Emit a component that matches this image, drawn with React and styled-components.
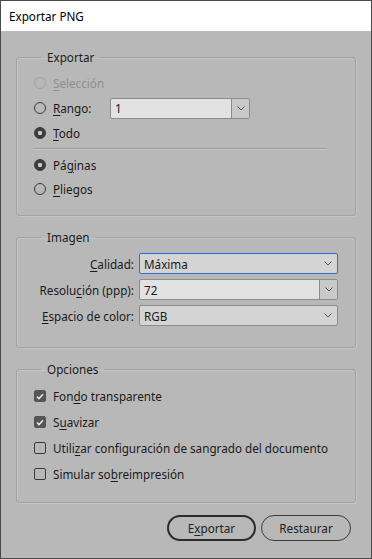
import React from "react";
import styled, { createGlobalStyle } from "styled-components";

const GlobalStyle = createGlobalStyle`
  html, body {
    margin: 0;
    padding: 0;
    background: #b8b8b8;
  }
  * {
    box-sizing: border-box;
  }
`;

const Window = styled.div`
  width: 372px;
  height: 559px;
  display: flex;
  flex-direction: column;
  border: 1px solid #4a4a4a;
  font-family: "Noto Sans", "Open Sans", sans-serif;
  font-size: 11.7px;
  color: #1b1b1b;
`;

const TitleBar = styled.div`
  height: 30px;
  background: #ffffff;
  display: flex;
  align-items: center;
  padding-left: 8px;
  color: #000;
`;

const Body = styled.div`
  flex: 1;
  background: #b8b8b8;
  display: flex;
  flex-direction: column;
  gap: 13px;
  padding: 18px 15px 0 15px;
`;

const Group = styled.fieldset`
  margin: 0;
  padding: ${({ $pad }) => $pad};
  border: 1px solid #a2a2a2;
  border-radius: 3px;
  box-shadow: inset 1px 1px 0 #c4c4c4, 1px 1px 0 #c4c4c4;
  min-width: 0;
`;

const Legend = styled.legend`
  margin-left: 8px;
  padding: 0 6px;
  line-height: 16px;
`;

const Column = styled.div`
  display: flex;
  flex-direction: column;
`;

const Row = styled.label`
  display: flex;
  align-items: center;
  height: ${({ $h }) => $h || 24}px;
  gap: 7px;
  padding-left: 1px;
  color: ${({ $disabled }) => ($disabled ? "#8f8f8f" : "inherit")};
`;

const Radio = styled.span`
  width: 12px;
  height: 12px;
  border-radius: 50%;
  flex: none;
  border: 1px solid ${({ $disabled }) => ($disabled ? "#a0a0a0" : "#3a3a3a")};
  background: ${({ $checked }) =>
    $checked ? "radial-gradient(circle, #c8c8c8 0 2px, #3d3d3d 2.5px)" : "transparent"};
`;

const Check = styled.span`
  width: 12px;
  height: 12px;
  flex: none;
  border-radius: 2px;
  border: 1px solid ${({ $checked }) => ($checked ? "#555" : "#3a3a3a")};
  background: ${({ $checked }) => ($checked ? "#555" : "transparent")};
  display: flex;
  align-items: center;
  justify-content: center;
`;

const Separator = styled.div`
  height: 1px;
  background: #9f9f9f;
  box-shadow: 0 1px 0 #c4c4c4;
  margin: 3px 14px 4px 0;
`;

const U = styled.span`
  text-decoration: underline;
  text-underline-offset: 2px;
`;

const Combo = styled.div`
  height: 21px;
  width: ${({ $w }) => ($w ? `${$w}px` : "100%")};
  display: flex;
  align-items: stretch;
  border: 1px solid ${({ $focus }) => ($focus ? "#2d6fd2" : "#8c8c8c")};
  border-radius: 2px;
  background: ${({ $editable }) => ($editable ? "#e2e2e2" : "#d4d4d4")};
  overflow: hidden;
`;

const ComboText = styled.span`
  flex: 1;
  display: flex;
  align-items: center;
  padding-left: 4px;
`;

const ComboButton = styled.span`
  width: 18px;
  flex: none;
  display: flex;
  align-items: center;
  justify-content: center;
  background: ${({ $split }) => ($split ? "#c9c9c9" : "transparent")};
  border-left: ${({ $split }) => ($split ? "1px solid #8c8c8c" : "none")};
`;

const RangoLabel = styled.span`
  width: 50px;
`;

const FormGrid = styled.div`
  display: grid;
  grid-template-columns: 101px 1fr;
  column-gap: 5px;
  row-gap: 5px;
  align-items: center;
  margin-right: 3px;
`;

const FieldLabel = styled.span`
  justify-self: end;
`;

const Buttons = styled.div`
  display: flex;
  justify-content: flex-end;
  gap: 5px;
  padding-right: 5px;
  margin-top: -1px;
`;

const Button = styled.button`
  width: ${({ $w }) => $w}px;
  height: 26px;
  border-radius: 13px;
  border: ${({ $primary }) => ($primary ? "2px solid #2b2b2b" : "1px solid #3c3c3c")};
  background: transparent;
  font: inherit;
  color: #222;
  padding: 0;
`;

const Chevron = () => (
  <svg width="8" height="5" viewBox="0 0 8 5">
    <path d="M0.5 0.5 L4 4 L7.5 0.5" fill="none" stroke="#555" strokeWidth="1" />
  </svg>
);

const Tick = () => (
  <svg width="8" height="7" viewBox="0 0 8 7">
    <path d="M1 3.6 L3 5.6 L7 1.2" fill="none" stroke="#e8e8e8" strokeWidth="1.5" />
  </svg>
);

const RadioRow = ({ checked, disabled, children, h }) => (
  <Row $disabled={disabled} $h={h}>
    <Radio $checked={checked} $disabled={disabled} />
    {children}
  </Row>
);

const CheckRow = ({ checked, children }) => (
  <Row $h={26}>
    <Check $checked={checked}>{checked && <Tick />}</Check>
    {children}
  </Row>
);

const Select = ({ value, focus, editable, w }) => (
  <Combo $focus={focus} $editable={editable} $w={w}>
    <ComboText>{value}</ComboText>
    <ComboButton $split={editable}>
      <Chevron />
    </ComboButton>
  </Combo>
);

export default function App() {
  return (
    <>
      <GlobalStyle />
      <Window>
        <TitleBar>Exportar PNG</TitleBar>
        <Body>
          <Group $pad="6px 14px 14px 16px">
            <Legend>Exportar</Legend>
            <Column>
              <RadioRow disabled>
                <span>
                  <U>S</U>elección
                </span>
              </RadioRow>
              <RadioRow h={26}>
                <RangoLabel>
                  <U>R</U>ango:
                </RangoLabel>
                <Select value="1" editable w={140} />
              </RadioRow>
              <RadioRow checked>
                <span>
                  <U>T</U>odo
                </span>
              </RadioRow>
              <Separator />
              <RadioRow checked>
                <span>
                  Pá<U>g</U>inas
                </span>
              </RadioRow>
              <RadioRow>
                <span>
                  <U>P</U>liegos
                </span>
              </RadioRow>
            </Column>
          </Group>

          <Group $pad="8px 14px 21px 16px">
            <Legend>Imagen</Legend>
            <FormGrid>
              <FieldLabel>
                <U>C</U>alidad:
              </FieldLabel>
              <Select value="Máxima" focus />
              <FieldLabel>
                Resolu<U>c</U>ión (ppp):
              </FieldLabel>
              <Select value="72" editable />
              <FieldLabel>
                <U>E</U>spacio de color:
              </FieldLabel>
              <Select value="RGB" />
            </FormGrid>
          </Group>

          <Group $pad="6px 14px 15px 16px">
            <Legend>Opciones</Legend>
            <Column>
              <CheckRow checked>
                <span>
                  Fon<U>d</U>o transparente
                </span>
              </CheckRow>
              <CheckRow checked>
                <span>
                  S<U>u</U>avizar
                </span>
              </CheckRow>
              <CheckRow>
                <span>
                  Utili<U>z</U>ar configuración de sangrado del documento
                </span>
              </CheckRow>
              <CheckRow>
                <span>
                  Simular so<U>b</U>reimpresión
                </span>
              </CheckRow>
            </Column>
          </Group>

          <Buttons>
            <Button $primary $w={89}>
              E<U>x</U>portar
            </Button>
            <Button $w={90}>Restaurar</Button>
          </Buttons>
        </Body>
      </Window>
    </>
  );
}
